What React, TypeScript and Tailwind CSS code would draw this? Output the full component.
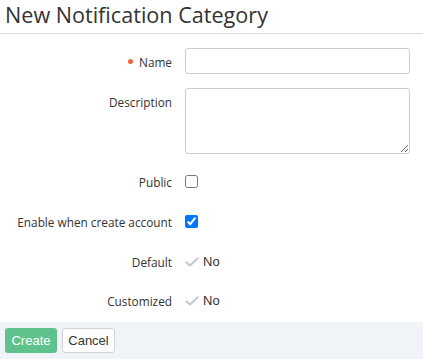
import React from "react";

function Check() {
  return (
    <svg width="14" height="12" viewBox="0 0 14 12" className="shrink-0">
      <path d="M1.5 6.5 L5 9.5 L12.5 2.5" fill="none" stroke="#c4c9ce" strokeWidth="2.2" strokeLinecap="round" strokeLinejoin="round" />
    </svg>
  );
}

export default function App() {
  const label = "text-[11.8px] text-[#333] text-right leading-[26px] h-[26px] pt-[1px]";
  return (
    <div className="w-[423px] h-[359px] bg-white flex flex-col overflow-hidden" style={{ fontFamily: '"Open Sans", sans-serif' }}>
      <div className="h-[34px] border-b border-[#dcdcdc] px-[5px] flex items-center">
        <h1 className="text-[21.6px] leading-none text-[#333] -mt-[4px]">New Notification Category</h1>
      </div>
      <div className="flex-1 pt-[14px] pr-[13px]">
        <div className="grid grid-cols-[172px_1fr] gap-x-[13px]">
          <div className={`${label} flex items-center justify-end gap-[6px]`}>
            <span className="w-[5px] h-[5px] rounded-full bg-[#f0643c] inline-block"></span>
            Name
          </div>
          <input className="h-[26px] border border-[#c8ccd0] rounded-[3px] px-2 text-[13px] outline-none" />

          <div className={`${label} mt-[14px]`}>Description</div>
          <textarea className="mt-[14px] h-[66px] border border-[#c8ccd0] rounded-[3px] px-2 text-[13px] outline-none block" />

          <div className={`${label} mt-[14px]`}>Public</div>
          <div className="mt-[14px] h-[26px] flex items-center pt-[1px]">
            <input type="checkbox" className="w-[13px] h-[13px] m-0" />
          </div>

          <div className={`${label} mt-[14px]`}>Enable when create account</div>
          <div className="mt-[14px] h-[26px] flex items-center pt-[1px]">
            <input type="checkbox" defaultChecked className="w-[13px] h-[13px] m-0" />
          </div>

          <div className={`${label} mt-[14px]`}>Default</div>
          <div className="mt-[14px] h-[26px] pt-[1px] flex items-center gap-[4px] text-[13px] text-[#333]" style={{ fontFamily: '"Liberation Sans", Arial, sans-serif' }}>
            <Check />
            <span>No</span>
          </div>

          <div className={`${label} mt-[13px]`}>Customized</div>
          <div className="mt-[13px] h-[26px] pt-[1px] flex items-center gap-[4px] text-[13px] text-[#333]" style={{ fontFamily: '"Liberation Sans", Arial, sans-serif' }}>
            <Check />
            <span>No</span>
          </div>
        </div>
      </div>
      <div className="h-[37px] bg-[#f0f3f7] flex items-start pt-[6px] px-[5px] gap-[5px]" style={{ fontFamily: '"Liberation Sans", Arial, sans-serif' }}>
        <button className="h-[25px] w-[52px] rounded-[3px] bg-[#5fc28c] text-white text-[13px]">Create</button>
        <button className="h-[25px] w-[53px] rounded-[3px] bg-white border border-[#d0d4d8] text-[#333] text-[13px]">Cancel</button>
      </div>
    </div>
  );
}
